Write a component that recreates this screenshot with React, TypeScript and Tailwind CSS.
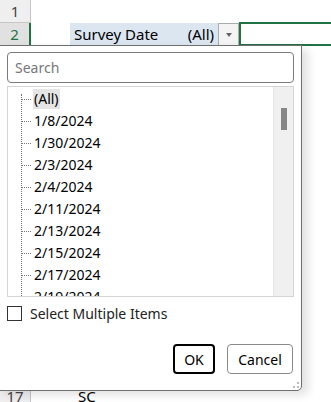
import React from "react";

const dates = [
  "1/8/2024",
  "1/30/2024",
  "2/3/2024",
  "2/4/2024",
  "2/11/2024",
  "2/13/2024",
  "2/15/2024",
  "2/17/2024",
  "2/19/2024",
];

function TreeRow({ label, active }: { label: string; active?: boolean }) {
  return (
    <div className="relative flex h-[22px] items-center pl-[25px]">
      <div className="absolute left-[14px] top-[11px] w-[9px] border-t border-dotted border-[#777]" />
      <span className={`px-[1px] leading-[20px] ${active ? "bg-[#e5e5e5]" : ""}`}>{label}</span>
    </div>
  );
}

export default function App() {
  return (
    <div
      className="relative h-[402px] w-[331px] overflow-hidden bg-white text-[15px] text-black"
      style={{ fontFamily: '"Segoe UI", "Noto Sans", "Open Sans", sans-serif' }}
    >
      {/* sheet rows */}
      <div className="flex h-[23px]">
        <div className="flex w-[31px] shrink-0 items-center justify-center border-b border-r border-[#c6c6c6] bg-[#efefef] text-[#444]">1</div>
        <div className="flex-1" />
      </div>
      <div className="flex h-[23px]">
        <div className="flex w-[31px] shrink-0 items-center justify-center border-b border-[#c6c6c6] border-r-2 border-r-[#217346] bg-[#e1e1e1] text-[#217346]">2</div>
        <div className="w-[39px] shrink-0" />
        <div className="flex w-[148px] shrink-0 items-center bg-[#dce6f1] pl-[4px]">
          <span>Survey Date</span>
          <span className="ml-auto pr-[4px]">(All)</span>
        </div>
        <div className="flex w-[21px] shrink-0 items-center justify-center border border-[#acacac] bg-[#f4f4f4]">
          <div className="h-0 w-0 border-x-[3.5px] border-t-[4px] border-x-transparent border-t-[#666]" />
        </div>
        <div className="mt-[-1px] h-[24px] w-[120px] shrink-0 border-2 border-[#217346]" />
      </div>
      <div className="h-[344px]" />
      <div className="flex h-[12px]">
        <div className="flex w-[31px] shrink-0 items-start justify-center overflow-hidden border-r border-t border-[#c6c6c6] bg-[#efefef] text-[#444] leading-[10px]">17</div>
        <div className="w-[47px] shrink-0" />
        <div className="overflow-hidden leading-[12px]">SC</div>
      </div>

      {/* filter popup */}
      <div className="absolute left-[-2px] top-[45px] flex h-[346px] w-[304px] flex-col rounded-br-[5px] border border-[#6f6f6f] bg-white pl-[8px] pr-[7px] pt-[6px] shadow-[6px_4px_10px_rgba(0,0,0,0.12)]">
        <div className="flex h-[31px] items-center rounded-[4px] border border-[#7a7a7a] pl-[7px] text-[14px] text-[#777]">
          Search
        </div>
        <div className="mt-[3px] flex h-[211px] border border-[#d4d4d4] text-[14px]">
          <div className="relative flex-1 overflow-hidden pt-[1px]">
            <div className="absolute left-[13px] top-[7px] h-[210px] border-l border-dotted border-[#777]" />
            <TreeRow label="(All)" active />
            {dates.map((d) => (
              <TreeRow key={d} label={d} />
            ))}
          </div>
          <div className="w-[20px] border-l border-[#e6e6e6] bg-[#f0f0f0] pt-[21px]">
            <div className="mx-auto h-[22px] w-[6px] bg-[#868686]" />
          </div>
        </div>
        <div className="mt-[6px] flex items-center gap-[8px] text-[14px] text-[#222]">
          <div className="h-[15px] w-[15px] border border-[#333]" />
          <span>Select Multiple Items</span>
        </div>
        <div className="mt-[20px] flex justify-end gap-[12px] pr-[1px] text-[14px]">
          <div className="flex h-[30px] w-[42px] items-center justify-center rounded-[4px] border-2 border-black">OK</div>
          <div className="flex h-[30px] w-[66px] items-center justify-center rounded-[4px] border border-[#8a8a8a]">Cancel</div>
        </div>
        <div className="absolute bottom-[2px] right-[2px] grid grid-cols-2 gap-[2px]">
          <div className="h-[2px] w-[2px]" />
          <div className="h-[2px] w-[2px] bg-[#bbb]" />
          <div className="h-[2px] w-[2px] bg-[#bbb]" />
          <div className="h-[2px] w-[2px] bg-[#bbb]" />
        </div>
      </div>
    </div>
  );
}
